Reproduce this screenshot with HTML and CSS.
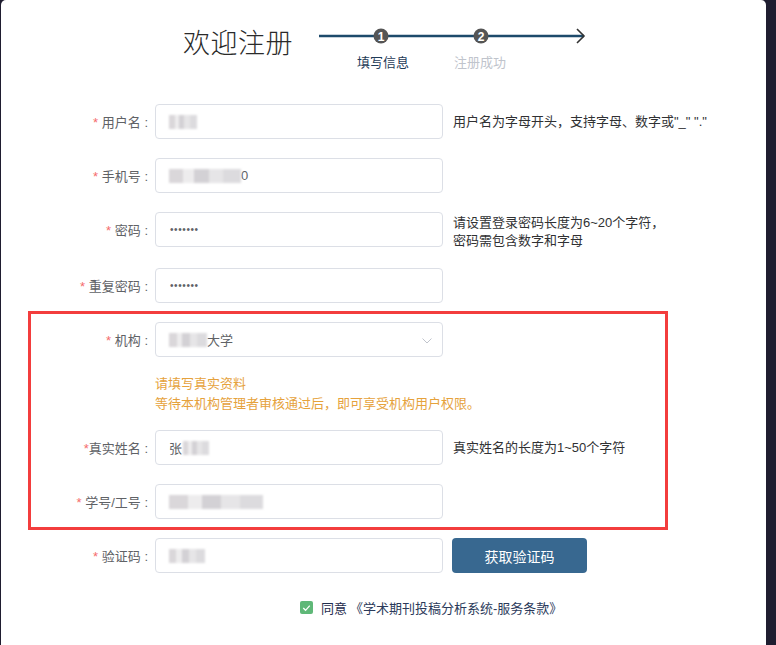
FILE: index.html
```html
<!DOCTYPE html>
<html lang="zh-CN">
<head>
<meta charset="utf-8">
<title>欢迎注册</title>
<link rel="stylesheet" href="styles.css">
</head>
<body>
<div class="panel">
  <div class="header">
    <h1 class="title">欢迎注册</h1>
    <div class="stepper">
      <svg class="step-line" width="268" height="18" viewBox="0 0 268 18">
        <line x1="0" y1="9" x2="265" y2="9" stroke="#1d4a6b" stroke-width="2.5"/>
        <polyline points="258,2 265,9 258,16" fill="none" stroke="#333" stroke-width="1.6"/>
        <circle cx="62" cy="9" r="7.5" fill="#555"/>
        <text x="62" y="13.5" text-anchor="middle" class="step-num">1</text>
        <circle cx="162" cy="9" r="7.5" fill="#555"/>
        <text x="162" y="13.5" text-anchor="middle" class="step-num">2</text>
      </svg>
      <div class="step-labels">
        <span class="step-label active">填写信息</span>
        <span class="step-label">注册成功</span>
      </div>
    </div>
  </div>

  <div class="form">
    <div class="row">
      <label class="label"><span class="req">*</span> 用户名 :</label>
      <div class="input"><span class="mask mask-user"></span></div>
      <div class="help">用户名为字母开头，支持字母、数字或"_" "."</div>
    </div>
    <div class="row">
      <label class="label"><span class="req">*</span> 手机号 :</label>
      <div class="input"><span class="mask mask-phone"></span><span class="val">0</span></div>
    </div>
    <div class="row row-pwd">
      <label class="label"><span class="req">*</span> 密码 :</label>
      <div class="input"><span class="dots">•••••••</span></div>
      <div class="help help-2">请设置登录密码长度为6~20个字符，<br>密码需包含数字和字母</div>
    </div>
    <div class="row row-before">
      <label class="label"><span class="req">*</span> 重复密码 :</label>
      <div class="input"><span class="dots">•••••••</span></div>
    </div>

    <div class="group">
      <div class="row row-in">
        <label class="label"><span class="req">*</span> 机构 :</label>
        <div class="input select"><span class="mask mask-org"></span><span class="val">大学</span>
          <svg class="chev" width="10" height="6" viewBox="0 0 10 6"><polyline points="0.5,0.5 5,5 9.5,0.5" fill="none" stroke="#c0c4cc" stroke-width="1"/></svg>
        </div>
      </div>
      <div class="tips">
        <div>请填写真实资料</div>
        <div>等待本机构管理者审核通过后，即可享受机构用户权限。</div>
      </div>
      <div class="row row-in">
        <label class="label"><span class="req">*</span>真实姓名 :</label>
        <div class="input"><span class="val">张</span><span class="mask mask-name"></span></div>
        <div class="help">真实姓名的长度为1~50个字符</div>
      </div>
      <div class="row row-in last">
        <label class="label"><span class="req">*</span> 学号/工号 :</label>
        <div class="input"><span class="mask mask-id"></span></div>
      </div>
    </div>

    <div class="row">
      <label class="label"><span class="req">*</span> 验证码 :</label>
      <div class="input"><span class="mask mask-code"></span></div>
      <button class="btn">获取验证码</button>
    </div>

    <div class="agree">
      <span class="check"><svg width="14" height="14" viewBox="0 0 14 14"><polyline points="3.5,7 6,9.5 10.5,4.5" fill="none" stroke="#fff" stroke-width="1.4"/></svg></span>
      <span class="agree-text">同意</span>
      <span class="terms">《学术期刊投稿分析系统-服务条款》</span>
    </div>
  </div>
</div>
</body>
</html>
```

FILE: styles.css
```css
* { box-sizing: border-box; }
html, body { margin: 0; padding: 0; }
body {
  background: #1f1d30;
  font-family: "Liberation Sans", "Noto Sans CJK SC", sans-serif;
  font-size: 13px;
  color: #303133;
  width: 776px;
  height: 645px;
  overflow: hidden;
}
.panel {
  margin-left: 1px;
  width: 765px;
  height: 645px;
  background: #fff;
  border-radius: 5px 5px 0 0;
}
.header {
  display: flex;
  padding-left: 182px;
  padding-top: 26px;
  height: 104px;
}
.title {
  margin: 0;
  font-size: 27px;
  font-weight: 300;
  line-height: 36px;
  color: #2a2a2a;
  letter-spacing: 0.5px;
}
.stepper {
  margin-left: 26px;
  padding-top: 1px;
}
.step-line { display: block; }
.step-num {
  font-family: "Liberation Sans", sans-serif;
  font-size: 12px;
  font-weight: bold;
  fill: #fff;
}
.step-labels {
  display: flex;
  padding-left: 38px;
  gap: 45px;
  margin-top: 10px;
  line-height: 16px;
}
.step-label { color: #c0c4cc; }
.step-label.active { color: #1f3b57; }

.row {
  display: flex;
  align-items: center;
  margin-bottom: 19px;
  height: 35px;
}
.row-pwd { margin-bottom: 21px; }
.row-before { margin-bottom: 8px; }
.label {
  width: 147px;
  text-align: right;
  color: #606266;
  white-space: nowrap;
}
.req { color: #f56c6c; }
.input {
  margin-left: 7px;
  width: 288px;
  height: 35px;
  border: 1px solid #dcdfe6;
  border-radius: 4px;
  display: flex;
  align-items: center;
  padding-left: 13px;
  color: #606266;
  position: relative;
  font-size: 13px;
}
.val { color: #606266; }
.dots {
  font-family: "Liberation Sans", sans-serif;
  font-size: 10px;
  letter-spacing: 0.6px;
  color: #606266;
  padding-left: 1px;
}
.mask {
  display: inline-block;
  height: 14px;
  background: linear-gradient(90deg, #d6d3d6 0 20%, #ecebec 20% 35%, #cfcdd1 35% 55%, #e4e3e5 55% 75%, #d9d8db 75% 100%);
  filter: blur(1.2px);
  opacity: 0.9;
}
.mask-user { width: 28px; }
.mask-phone { width: 72px; }
.mask-org { width: 38px; }
.mask-name { width: 26px; margin-left: 1px; }
.mask-id { width: 94px; }
.mask-code { width: 36px; }
.select .chev {
  position: absolute;
  right: 10px;
  top: 15px;
}
.help {
  margin-left: 10px;
  color: #303133;
  line-height: 18px;
  white-space: nowrap;
}
.help-2 { margin-top: 4px; }

.group {
  margin-left: 27px;
  width: 640px;
  border: 3px solid #f33d3d;
  padding-top: 8px;
  padding-bottom: 8px;
  margin-bottom: 8px;
}
.row-in .label { width: 117px; }
.row-in.last { margin-bottom: 0; }
.tips {
  margin-left: 124px;
  margin-top: -2px;
  margin-bottom: 16px;
  color: #e6a23c;
  line-height: 20px;
}
.btn {
  margin-left: 9px;
  width: 135px;
  height: 35px;
  border: none;
  border-radius: 4px;
  background: #386890;
  color: #fff;
  font-family: "Liberation Sans", "Noto Sans CJK SC", sans-serif;
  font-size: 14px;
  padding: 0;
}
.agree {
  display: flex;
  align-items: center;
  padding-left: 299px;
  margin-top: 25px;
  color: #1f2d4d;
}
.check {
  width: 13px;
  height: 13px;
  background: #5fb878;
  border-radius: 2px;
  display: flex;
  align-items: center;
  justify-content: center;
}
.check svg { display: block; }
.agree-text { margin-left: 8px; }
.terms { margin-left: 3px; color: #2b3a5a; }
```
